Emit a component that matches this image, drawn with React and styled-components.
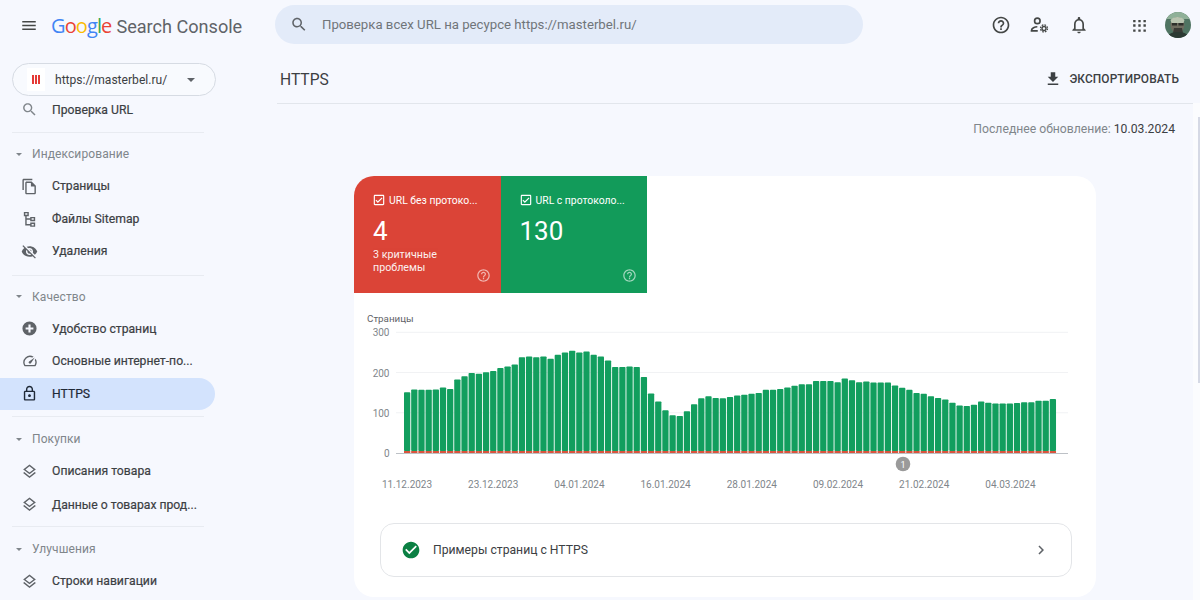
import React from 'react';
import styled, { createGlobalStyle } from 'styled-components';

const Global = createGlobalStyle`
  html, body { margin: 0; padding: 0; height: 100%; overflow: hidden; background: #f6f8fe; }
  body { font-family: Roboto, "Liberation Sans", sans-serif; color: #3c4043; }
  * { box-sizing: border-box; }
`;

const Page = styled.div`
  width: 1200px; height: 600px; overflow: hidden; display: flex; flex-direction: column; background: #f6f8fe;
`;
const Header = styled.header`
  height: 50px; flex: none; display: flex; align-items: center; padding-left: 20px;
`;
const IconBtn = styled.span`
  display: inline-flex; align-items: center; justify-content: center; flex: none; color: ${p => p.$color || '#444746'};
  width: ${p => p.$w || 18}px; height: ${p => p.$w || 18}px;
  margin-left: ${p => p.$ml || 0}px;
`;
const Logo = styled.div`
  display: flex; align-items: baseline; margin-left: 13px; width: 224px; font-size: 20px; white-space: nowrap; font-family: "Open Sans", Roboto, sans-serif;
`;
const GoogleLetter = styled.span`
  color: ${p => p.$c}; letter-spacing: -0.9px;
`;
const LogoText = styled.span`
  margin-left: 5px; color: #5f6368; font-size: 18.1px; font-family: Roboto, sans-serif;
`;
const Search = styled.div`
  width: 588px; height: 39px; margin-top: -1px; border-radius: 20px; background: #e3ebf9; display: flex; align-items: center; padding-left: 15px; gap: 14px; color: #70757a; font-size: 13.2px;
`;
const HeaderRight = styled.div`
  display: flex; align-items: center; margin-left: 128px;
`;
const Avatar = styled.div`
  width: 26px; height: 26px; border-radius: 50%; overflow: hidden; margin-left: 16px; flex: none;
`;
const Body = styled.div`
  flex: 1; display: flex; min-height: 0;
`;
const Side = styled.aside`
  width: 277px; flex: none; display: flex; flex-direction: column; height: 550px; overflow: hidden; padding-top: 13px;
`;
const Property = styled.div`
  margin-left: 12px; width: 204px; height: 33px; border: 1px solid #d6dbe3; border-radius: 17px; display: flex; align-items: center; padding-left: 14px; font-size: 12.1px; color: #3c4043; flex: none; background: #f8fafe;
`;
const Favicon = styled.span`
  width: 18px; height: 23px; background: #fff; display: flex; align-items: center; justify-content: center; gap: 1px; margin-right: 10px;
`;
const FaviconBar = styled.i`
  display: block; width: 2px; height: 9px; background: #e53935;
`;
const Caret = styled.span`
  margin-left: 20px; width: 0; height: 0; border-left: 4.5px solid transparent; border-right: 4.5px solid transparent; border-top: 4.5px solid #5f6368;
`;
const Item = styled.div`
  height: ${p => p.$h || 32.5}px; margin-top: ${p => p.$mt || 0}px; flex: none; display: flex; align-items: center; padding-left: 21px; gap: 14px; width: 215px; font-size: 12.2px; font-weight: 400; white-space: nowrap; -webkit-text-stroke: 0.2px currentColor;
  color: ${p => p.$active ? '#1f2937' : '#3c4043'};
  background: ${p => p.$active ? '#d3e3fd' : 'transparent'};
  border-radius: ${p => p.$active ? '0 17px 17px 0' : '0'};
`;
const Divider = styled.div`
  height: 1px; background: #e8ebf1; margin: ${p => p.$m || 8}px 0 0 12px; width: 192px; flex: none;
`;
const Section = styled.div`
  height: 33px; flex: none; margin-top: ${p => p.$mt || 0}px; padding: 1.5px 0 0 16px; display: flex; align-items: center; gap: 10px; font-size: 12px; color: #80868b; letter-spacing: 0.1px;
`;
const SectionCaret = styled.span`
  width: 0; height: 0; border-left: 3.5px solid transparent; border-right: 3.5px solid transparent; border-top: 3.5px solid #80868b;
`;
const Main = styled.main`
  flex: 1; min-width: 0; display: flex; flex-direction: column;
`;
const TitleBar = styled.div`
  height: 54px; flex: none; display: flex; align-items: center; justify-content: space-between; padding: 5px 21px 0 3px; border-bottom: 1px solid #e2e6ec;
`;
const Title = styled.h1`
  margin: 1px 0 0; font-size: 15.6px; font-weight: 400; color: #3c4043;
`;
const Export = styled.div`
  display: flex; align-items: center; gap: 7px; margin-top: -1px; font-size: 11.9px; font-weight: 500; color: #3c4043; letter-spacing: 0.1px;
`;
const Updated = styled.div`
  height: 52px; flex: none; padding: 18px 25px 0 0; text-align: right; font-size: 12.2px; color: #80868b;
`;
const UpdatedDate = styled.span`
  color: #3c4043;
`;
const Card = styled.section`
  margin-left: 77px; margin-top: 20px; width: 742px; height: 421px; flex: none; background: #fff; border-radius: 20px; overflow: hidden; padding-bottom: 20px;
`;
const Tiles = styled.div`
  display: flex; height: 117px;
`;
const Tile = styled.div`
  position: relative; width: 146.5px; height: 117px; background: ${p => p.$bg}; color: #fff; padding: 17px 0 0 19px;
`;
const TileHead = styled.div`
  display: flex; align-items: center; gap: 3px; margin-left: -1px; font-size: 10.4px; white-space: nowrap;
`;
const TileNum = styled.div`
  font-size: 26px; line-height: 30px; margin-top: 9px;
`;
const TileSub = styled.div`
  font-size: 10.7px; line-height: 13px; margin-top: 2px; opacity: 0.92;
`;
const TileHelp = styled.span`
  position: absolute; right: 10px; bottom: 10px; display: flex; opacity: 0.6;
`;
const ChartWrap = styled.div`
  height: 230px; flex: none;
`;
const ExampleRow = styled.div`
  margin: 0 0 0 26px; width: 692px; height: 54px; border: 1px solid #e3e5e8; border-radius: 14px; display: flex; align-items: center; padding: 0 21px 0 20px; gap: 12px; font-size: 12.2px; color: #3c4043;
`;
const RowLabel = styled.span`
  flex: 1;
`;
const ScrollTrack = styled.div`
  position: fixed; right: 0; top: 103px; bottom: 0; width: 7px; background: #fbfcfe; display: flex; justify-content: flex-end; padding-top: 14px;
`;
const ScrollThumb = styled.div`
  width: 2px; height: 266px; background: #d5d9e5;
`;

const V = [151,158,157,157,158,163,159,183,191,199,197,201,204,211,215,220,238,240,238,240,234,244,250,254,250,252,244,240,230,214,214,215,214,189,148,128,106,94,92,104,121,136,141,137,136,139,143,145,147,149,157,157,159,163,167,171,171,179,179,179,176,185,181,176,178,175,175,175,168,162,157,149,147,141,137,133,125,118,117,120,128,125,123,123,123,124,126,126,130,130,134];

const Svg = ({ d, size = 18, fill = 'currentColor', vb = '0 0 24 24', rule }) => (
  <svg width={size} height={size} viewBox={vb} fill={fill}><path d={d} fillRule={rule} /></svg>
);
const P = {
  menu: 'M3 18h18v-2H3v2zm0-5h18v-2H3v2zm0-7v2h18V6H3z',
  search: 'M15.5 14h-.79l-.28-.27C15.41 12.59 16 11.11 16 9.5 16 5.91 13.09 3 9.5 3S3 5.91 3 9.5 5.91 16 9.5 16c1.61 0 3.09-.59 4.23-1.57l.27.28v.79l5 4.99L20.49 19l-4.99-5zm-6 0C7.01 14 5 11.99 5 9.5S7.01 5 9.5 5 14 7.01 14 9.5 11.99 14 9.5 14z',
  help: 'M11 18h2v-2h-2v2zm1-16C6.48 2 2 6.48 2 12s4.48 10 10 10 10-4.48 10-10S17.52 2 12 2zm0 18c-4.41 0-8-3.59-8-8s3.59-8 8-8 8 3.59 8 8-3.59 8-8 8zm0-14c-2.21 0-4 1.79-4 4h2c0-1.1.9-2 2-2s2 .9 2 2c0 2-3 1.75-3 5h2c0-2.25 3-2.5 3-5 0-2.21-1.79-4-4-4z',
  bell: 'M12 22c1.1 0 2-.9 2-2h-4c0 1.1.9 2 2 2zm6-6v-5c0-3.07-1.63-5.64-4.5-6.32V4c0-.83-.67-1.5-1.5-1.5s-1.5.67-1.5 1.5v.68C7.64 5.36 6 7.92 6 11v5l-2 2v1h16v-1l-2-2zm-2 1H8v-6c0-2.48 1.51-4.5 4-4.5s4 2.02 4 4.5v6z',
  apps: 'M4 8h3V5H4v3zm6.5 0h3V5h-3v3zM17 5v3h3V5h-3zM4 13.5h3v-3H4v3zm6.5 0h3v-3h-3v3zm6.5 0h3v-3h-3v3zM4 20h3v-3H4v3zm6.5 0h3v-3h-3v3zm6.5 0h3v-3h-3v3z',
  pages: 'M16 1H4c-1.1 0-2 .9-2 2v14h2V3h12V1zm-1 4H8c-1.1 0-1.99.9-1.99 2L6 21c0 1.1.89 2 1.99 2H19c1.1 0 2-.9 2-2V11l-6-6zM8 21V7h6v5h5v9H8z',
  sitemap: 'M4 2h7v6H8v3h5V9h7v6h-7v-2H8v6h5v-2h7v6h-7v-2H6V8H4V2zm2 2v2h3V4H6zm9 7v2h3v-2h-3zm0 8v2h3v-2h-3z',
  eyeOff: 'M12 7c2.76 0 5 2.24 5 5 0 .65-.13 1.26-.36 1.83l2.92 2.92c1.51-1.26 2.7-2.89 3.43-4.75-1.73-4.39-6-7.5-11-7.5-1.4 0-2.74.25-3.98.7l2.16 2.16C10.74 7.13 11.35 7 12 7zM2 4.27l2.28 2.28.46.46C3.08 8.3 1.78 10.02 1 12c1.73 4.39 6 7.5 11 7.5 1.55 0 3.03-.3 4.38-.84l.42.42L19.73 22 21 20.73 3.27 3 2 4.27zM7.53 9.8l1.55 1.55c-.05.21-.08.43-.08.65 0 1.66 1.34 3 3 3 .22 0 .44-.03.65-.08l1.55 1.55c-.67.33-1.41.53-2.2.53-2.76 0-5-2.24-5-5 0-.79.2-1.53.53-2.2zm4.31-.78l3.15 3.15.02-.16c0-1.66-1.34-3-3-3l-.17.01z',
  plus: 'M12 2a10 10 0 1 0 0 20 10 10 0 0 0 0-20zm5.500 11.500h-4v4h-3v-4h-4v-3h4v-4h3v4h4z',
  gauge: 'M20.38 8.57l-1.23 1.85a8 8 0 0 1-.22 7.58H5.07A8 8 0 0 1 15.58 6.85l1.85-1.23A10 10 0 0 0 3.35 19a2 2 0 0 0 1.72 1h13.85a2 2 0 0 0 1.74-1 10 10 0 0 0-.27-10.44zm-9.79 6.84a2 2 0 0 0 2.83 0l5.66-8.49-8.49 5.66a2 2 0 0 0 0 2.83z',
  lock: 'M18 8h-1V6c0-2.76-2.24-5-5-5S7 3.24 7 6v2H6c-1.1 0-2 .9-2 2v10c0 1.1.9 2 2 2h12c1.1 0 2-.9 2-2V10c0-1.1-.9-2-2-2zM9 6c0-1.66 1.34-3 3-3s3 1.34 3 3v2H9V6zm9 14H6V10h12v10zm-6-3c1.1 0 2-.9 2-2s-.9-2-2-2-2 .9-2 2 .9 2 2 2z',
  layers: 'M11.99 18.54l-7.37-5.73L3 14.07l9 7 9-7-1.63-1.27-7.38 5.74zM12 16l7.36-5.73L21 9l-9-7-9 7 1.63 1.27L12 16zm0-11.47L17.74 9 12 13.47 6.26 9 12 4.53z',
  download: 'M19 9h-4V3H9v6H5l7 7 7-7zM5 18v2h14v-2H5z',
  checkbox: 'M19 5v14H5V5h14m0-2H5c-1.1 0-2 .9-2 2v14c0 1.1.9 2 2 2h14c1.1 0 2-.9 2-2V5c0-1.1-.9-2-2-2zm-9 14l-4-4 1.41-1.41L10 14.17l6.59-6.59L18 9l-8 8z',
  okCircle: 'M12 2C6.48 2 2 6.48 2 12s4.48 10 10 10 10-4.48 10-10S17.52 2 12 2zm-2 15l-5-5 1.41-1.41L10 14.17l7.59-7.59L19 8l-9 9z',
  chevron: 'M10 6L8.59 7.41 13.17 12l-4.58 4.59L10 18l6-6z',
};

const AdminIcon = () => (
  <svg width="21" height="21" viewBox="0 0 24 24" fill="none" stroke="currentColor">
    <circle cx="10" cy="6.500" r="3.300" strokeWidth="2" />
    <path d="M3 18.500h7.500M3 19.500v-1.500c0-2.800 4-4.500 7-4.500" strokeWidth="2" />
    <circle cx="18" cy="15.500" r="2.400" strokeWidth="1.700" />
    <circle cx="18" cy="15.500" r="4.200" strokeWidth="1.500" strokeDasharray="2 1.300" />
  </svg>
);

const AvatarArt = () => (
  <svg width="26" height="26" viewBox="0 0 26 26">
    <rect width="26" height="26" fill="#4f7462" />
    <rect width="26" height="7" fill="#8fb098" />
    <ellipse cx="12.500" cy="13" rx="7" ry="8" fill="#6f6d60" />
    <path d="M5.500 8c3-4 11-4 14 0l-1 3H6.500z" fill="#b9c4b0" />
    <rect x="7" y="11" width="5" height="2.500" fill="#2d2f2b" />
    <rect x="13.500" y="11" width="5" height="2.500" fill="#2d2f2b" />
    <path d="M9 16h8l1 5H8z" fill="#3a3b36" />
    <path d="M2 26c1-4 5-6 11-6s10 2 11 6z" fill="#2c3a33" />
  </svg>
);

const Bars = () => {
  const left = 404 - 354, pitch = 7.175, zero = 453 - 293, k = 0.4023;
  const gridY = [0, 100, 200, 300];
  const dates = ['11.12.2023', '23.12.2023', '04.01.2024', '16.01.2024', '28.01.2024', '09.02.2024', '21.02.2024', '04.03.2024'];
  return (
    <svg width="742" height="230" viewBox="0 0 742 230" style={{ display: 'block' }}>
      <text x="13" y="29" fontSize="9.800" fill="#5f6368">Страницы</text>
      {gridY.slice(1).map(g => (
        <line key={g} x1="42" x2="714" y1={zero - g * k} y2={zero - g * k} stroke="#f1f2f4" />
      ))}
      <line x1="42" x2="714" y1={zero + 0.500} y2={zero + 0.500} stroke="#bdc1c6" />
      {gridY.map(g => (
        <text key={g} x="35.500" y={zero - g * k + 4} textAnchor="end" fontSize="10" fill="#80868b">{g}</text>
      ))}
      {V.map((v, i) => (
        <g key={i}>
          <rect x={left + i * pitch} y={zero - v * k} width={pitch - 0.900} height={v * k - 2} rx="0.800" fill="#129e5e" />
          <rect x={left + i * pitch} y={zero - 2} width={pitch - 0.900} height="2" fill="#d9543d" />
        </g>
      ))}
      {dates.map((d, i) => (
        <text key={d} x={53 + i * 86.200} y="195" textAnchor="middle" fontSize="10" fill="#80868b">{d}</text>
      ))}
      <circle cx="549" cy="171" r="7.300" fill="#9a9a9a" />
      <text x="549" y="174.500" textAnchor="middle" fontSize="9" fill="#fff">1</text>
    </svg>
  );
};

export default function App() {
  return (
    <Page>
      <Global />
      <Header>
        <IconBtn $w={18}><Svg d={P.menu} size={19} /></IconBtn>
        <Logo>
          <GoogleLetter $c="#4285f4">G</GoogleLetter>
          <GoogleLetter $c="#ea4335">o</GoogleLetter>
          <GoogleLetter $c="#fbbc05">o</GoogleLetter>
          <GoogleLetter $c="#4285f4">g</GoogleLetter>
          <GoogleLetter $c="#34a853">l</GoogleLetter>
          <GoogleLetter $c="#ea4335">e</GoogleLetter>
          <LogoText>Search Console</LogoText>
        </Logo>
        <Search>
          <IconBtn $color="#5f6368"><Svg d={P.search} size={19} /></IconBtn>
          Проверка всех URL на ресурсе https://masterbel.ru/
        </Search>
        <HeaderRight>
          <IconBtn $w={20}><Svg d={P.help} size={20} /></IconBtn>
          <IconBtn $w={20} $ml={18}><AdminIcon /></IconBtn>
          <IconBtn $w={20} $ml={20}><Svg d={P.bell} size={20} /></IconBtn>
          <IconBtn $w={20} $ml={40}><Svg d={P.apps} size={19} /></IconBtn>
          <Avatar><AvatarArt /></Avatar>
        </HeaderRight>
      </Header>
      <Body>
        <Side>
          <Property>
            <Favicon><FaviconBar /><FaviconBar /><FaviconBar /></Favicon>
            https://masterbel.ru/
            <Caret />
          </Property>
          <Item $h={27}><IconBtn $w={17} $color="#80868b"><Svg d={P.search} size={17} /></IconBtn>Проверка URL</Item>
          <Divider $m={9} />
          <Section $mt={4}><SectionCaret />Индексирование</Section>
          <Item><IconBtn $w={17} $color="#5f6368"><Svg d={P.pages} size={17} /></IconBtn>Страницы</Item>
          <Item><IconBtn $w={17} $color="#5f6368"><Svg d={P.sitemap} size={18} /></IconBtn>Файлы Sitemap</Item>
          <Item><IconBtn $w={17} $color="#5f6368"><Svg d={P.eyeOff} size={17} /></IconBtn>Удаления</Item>
          <Divider $m={7} />
          <Section $mt={4}><SectionCaret />Качество</Section>
          <Item><IconBtn $w={17} $color="#5f6368"><Svg d={P.plus} size={17} rule="evenodd" /></IconBtn>Удобство страниц</Item>
          <Item><IconBtn $w={17} $color="#5f6368"><Svg d={P.gauge} size={16} /></IconBtn>Основные интернет-по...</Item>
          <Item $active><IconBtn $w={17} $color="#1f2937"><Svg d={P.lock} size={19} /></IconBtn>HTTPS</Item>
          <Divider $m={6} />
          <Section $mt={5}><SectionCaret />Покупки</Section>
          <Item><IconBtn $w={17} $color="#5f6368"><Svg d={P.layers} size={17} /></IconBtn>Описания товара</Item>
          <Item $mt={1}><IconBtn $w={17} $color="#5f6368"><Svg d={P.layers} size={17} /></IconBtn>Данные о товарах прод...</Item>
          <Divider $m={5} />
          <Section $mt={5}><SectionCaret />Улучшения</Section>
          <Item><IconBtn $w={17} $color="#5f6368"><Svg d={P.layers} size={17} /></IconBtn>Строки навигации</Item>
        </Side>
        <Main>
          <TitleBar>
            <Title>HTTPS</Title>
            <Export><Svg d={P.download} size={18} />ЭКСПОРТИРОВАТЬ</Export>
          </TitleBar>
          <Updated>Последнее обновление: <UpdatedDate>10.03.2024</UpdatedDate></Updated>
          <Card>
            <Tiles>
              <Tile $bg="#db4437">
                <TileHead><Svg d={P.checkbox} size={14} />URL без протоко...</TileHead>
                <TileNum>4</TileNum>
                <TileSub>3 критичные<br />проблемы</TileSub>
                <TileHelp><Svg d={P.help} size={15} /></TileHelp>
              </Tile>
              <Tile $bg="#129b5a">
                <TileHead><Svg d={P.checkbox} size={14} />URL с протоколо...</TileHead>
                <TileNum>130</TileNum>
                <TileHelp><Svg d={P.help} size={15} /></TileHelp>
              </Tile>
            </Tiles>
            <ChartWrap><Bars /></ChartWrap>
            <ExampleRow>
              <IconBtn $w={20} $color="#0b8043"><Svg d={P.okCircle} size={20} /></IconBtn>
              <RowLabel>Примеры страниц с HTTPS</RowLabel>
              <IconBtn $w={18} $color="#5f6368"><Svg d={P.chevron} size={18} /></IconBtn>
            </ExampleRow>
          </Card>
        </Main>
      </Body>
      <ScrollTrack><ScrollThumb /></ScrollTrack>
    </Page>
  );
}
